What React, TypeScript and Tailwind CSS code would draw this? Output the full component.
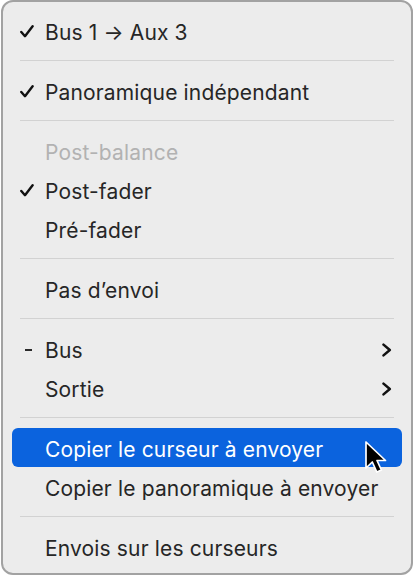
import React from "react";

type Item =
  | { kind: "sep" }
  | {
      kind: "item";
      label: string;
      mark?: "check" | "dash";
      disabled?: boolean;
      submenu?: boolean;
      active?: boolean;
    };

const items: Item[] = [
  { kind: "item", label: "Bus 1 → Aux 3", mark: "check" },
  { kind: "sep" },
  { kind: "item", label: "Panoramique indépendant", mark: "check" },
  { kind: "sep" },
  { kind: "item", label: "Post-balance", disabled: true },
  { kind: "item", label: "Post-fader", mark: "check" },
  { kind: "item", label: "Pré-fader" },
  { kind: "sep" },
  { kind: "item", label: "Pas d’envoi" },
  { kind: "sep" },
  { kind: "item", label: "Bus", mark: "dash", submenu: true },
  { kind: "item", label: "Sortie", submenu: true },
  { kind: "sep" },
  { kind: "item", label: "Copier le curseur à envoyer", active: true },
  { kind: "item", label: "Copier le panoramique à envoyer" },
  { kind: "sep" },
  { kind: "item", label: "Envois sur les curseurs" },
];

function Check() {
  return (
    <svg width="14" height="13" viewBox="0 0 14 13" className="block">
      <path
        d="M1.3 7 L5 11.2 L12.6 1.3"
        fill="none"
        stroke="#111"
        strokeWidth="2.4"
        strokeLinecap="round"
        strokeLinejoin="round"
      />
    </svg>
  );
}

function Chevron() {
  return (
    <svg width="11" height="14" viewBox="0 0 11 14" className="block">
      <path
        d="M2.5 1.6 L8.8 7 L2.5 12.4"
        fill="none"
        stroke="#111"
        strokeWidth="2.5"
        strokeLinecap="round"
        strokeLinejoin="round"
      />
    </svg>
  );
}

function Pointer() {
  return (
    <svg
      width="28"
      height="38"
      viewBox="0 0 28 38"
      className="absolute left-[361px] top-[12px]"
    >
      <path
        d="M2 2 L2 28 L8.3 22 L12.8 32 L17.4 30 L13 20.5 L21.5 20.5 Z"
        fill="#000"
        stroke="#fff"
        strokeWidth="1.7"
        strokeLinejoin="round"
      />
    </svg>
  );
}

export default function App() {
  return (
    <div
      className="w-[415px] h-[577px] bg-white"
      style={{ fontFamily: "Inter, 'Noto Sans', sans-serif" }}
    >
      <div className="ml-[1px] w-[412px] h-[575px] rounded-[12px] border-2 border-[#a2a2a2] bg-[#ececec] pt-[9px]">
        {items.map((item, i) =>
          item.kind === "sep" ? (
            <div key={i} className="h-[21px] flex items-center px-[17px]">
              <div className="h-px w-full bg-[#d2d2d2]" />
            </div>
          ) : (
            <div key={i} className="relative h-[39px] px-[9px]">
              <div
                className={
                  "flex h-full items-center rounded-[6px] " +
                  (item.active ? "bg-[#0b63de]" : "")
                }
              >
                <div className="w-[33px] flex items-center pl-[8px] mt-[2px]">
                  {item.mark === "check" && <Check />}
                  {item.mark === "dash" && (
                    <div className="ml-[5px] h-[2px] w-[7px] bg-[#2a2a2a]" />
                  )}
                </div>
                <span
                  className={
                    "flex-1 mt-[3px] text-[21px] tracking-[0.15px] leading-none " +
                    (item.active
                      ? "text-white"
                      : item.disabled
                      ? "text-[#b2b2b2]"
                      : "text-[#262626]")
                  }
                >
                  {item.label}
                </span>
                {item.submenu && (
                  <div className="pr-[10px] mt-[2px]">
                    <Chevron />
                  </div>
                )}
              </div>
              {item.active && <Pointer />}
            </div>
          )
        )}
      </div>
    </div>
  );
}
